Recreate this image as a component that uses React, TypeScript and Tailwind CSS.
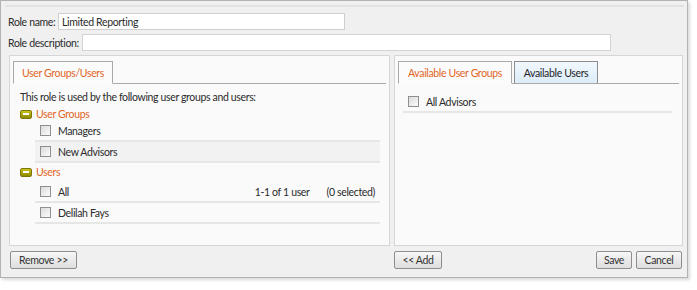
import React from "react";

const font = { fontFamily: "Lato, 'Liberation Sans', sans-serif" };

function Checkbox() {
  return (
    <span className="inline-block w-[11px] h-[11px] border border-[#8e8f8f] bg-gradient-to-br from-[#dcdcdc] to-[#fbfbfb] shrink-0" />
  );
}

function Minus() {
  return (
    <span className="inline-flex items-center justify-center w-[12px] h-[9px] rounded-[2px] bg-gradient-to-b from-[#c9c21a] to-[#8f8a00] border border-[#7d7800] shrink-0">
      <span className="block w-[6px] h-[2px] bg-white" />
    </span>
  );
}

function Row({ label, shaded, right }: { label: string; shaded?: boolean; right?: React.ReactNode }) {
  return (
    <div className={`h-[21px] border-b-2 border-[#e6e6e6] flex items-center pl-[5px] pr-[5px] ${shaded ? "bg-[#f2f2f2]" : ""}`}>
      <Checkbox />
      <span className="ml-[7px] text-[#2b2b2b] whitespace-nowrap">{label}</span>
      {right ? <span className="ml-auto flex whitespace-nowrap">{right}</span> : null}
    </div>
  );
}

function Tab({ label, active, w }: { label: string; active?: boolean; w: string }) {
  return (
    <div
      className={`${w} h-[23px] -mb-px flex items-center justify-center whitespace-nowrap border ${
        active
          ? "border-[#a9a9a9] border-b-[#fbfbfb] bg-[#fbfbfb] text-[#e2651f]"
          : "border-[#8d8d8d] border-b-[#a9a9a9] bg-gradient-to-b from-[#f2f8fd] to-[#dcecfa] text-[#1f1f1f]"
      }`}
    >
      {label}
    </div>
  );
}

function Button({ label, w }: { label: string; w: string }) {
  return (
    <button className={`${w} h-[18px] border border-[#8e8e8e] rounded-[2px] bg-gradient-to-b from-[#f7f7f7] to-[#dedede] text-[#333] leading-none flex items-center justify-center whitespace-nowrap`}>
      {label}
    </button>
  );
}

export default function App() {
  return (
    <div className="w-[697px] h-[290px] bg-white text-[10.5px] tracking-[-0.35px] leading-[14px] text-[#2b2b2b]" style={font}>
      <div className="w-[688px] h-[278px] border border-[#b3b3b3] bg-[#f0f0f0] shadow-[2px_2px_3px_rgba(0,0,0,0.15)] flex flex-col">
        <div className="ml-[4px] mr-[3px] mt-[4px] h-[2px] bg-[#e2e2e2]" />
        <div className="mt-[6px] h-[17px] flex items-center pl-[7px]">
          <span className="w-[50px] whitespace-nowrap">Role name:</span>
          <div className="w-[287px] h-[17px] border border-[#cfcfcf] bg-white flex items-center px-[3px]">Limited Reporting</div>
        </div>
        <div className="mt-[4px] h-[17px] flex items-center pl-[7px]">
          <span className="w-[74px] whitespace-nowrap">Role description:</span>
          <div className="w-[529px] h-[17px] border border-[#d3d3d3] bg-white" />
        </div>
        <div className="mt-[4px] flex pl-[8px] gap-[4px]">
          <div className="w-[381px] h-[191px] border border-[#d6d6d6] bg-[#fafafa] pt-[5px] px-[3px]">
            <div className="flex border-b border-[#a9a9a9]">
              <Tab label="User Groups/Users" active w="w-[100px]" />
            </div>
            <div className="pl-[7px] pr-[6px] pt-[6px]">
              <div className="h-[14px] whitespace-nowrap">This role is used by the following user groups and users:</div>
              <div className="mt-[3px] h-[14px] flex items-center gap-[4px]">
                <Minus />
                <span className="text-[#e2651f]">User Groups</span>
              </div>
              <div className="ml-[15px]">
                <Row label="Managers" />
                <Row label="New Advisors" shaded />
              </div>
              <div className="mt-[2px] h-[14px] flex items-center gap-[4px]">
                <Minus />
                <span className="text-[#e2651f]">Users</span>
              </div>
              <div className="ml-[15px] mt-[3px]">
                <Row
                  label="All"
                  right={
                    <>
                      <span>1-1 of 1 user</span>
                      <span className="ml-[17px]">(0 selected)</span>
                    </>
                  }
                />
                <Row label="Delilah Fays" />
              </div>
            </div>
          </div>
          <div className="w-[289px] h-[191px] border border-[#d6d6d6] bg-[#fafafa] pt-[5px] px-[3px]">
            <div className="flex border-b border-[#a9a9a9] gap-[2px]">
              <Tab label="Available User Groups" active w="w-[114px]" />
              <Tab label="Available Users" w="w-[84px]" />
            </div>
            <div className="pl-[5px] pr-[7px] pt-[8px]">
              <Row label="All Advisors" />
            </div>
          </div>
        </div>
        <div className="mt-[5px] flex pl-[9px] pr-[5px]">
          <Button label="Remove >>" w="w-[67px]" />
          <div className="ml-[317px]">
            <Button label="<< Add" w="w-[48px]" />
          </div>
          <div className="ml-auto flex gap-[4px]">
            <Button label="Save" w="w-[36px]" />
            <Button label="Cancel" w="w-[46px]" />
          </div>
        </div>
      </div>
    </div>
  );
}
